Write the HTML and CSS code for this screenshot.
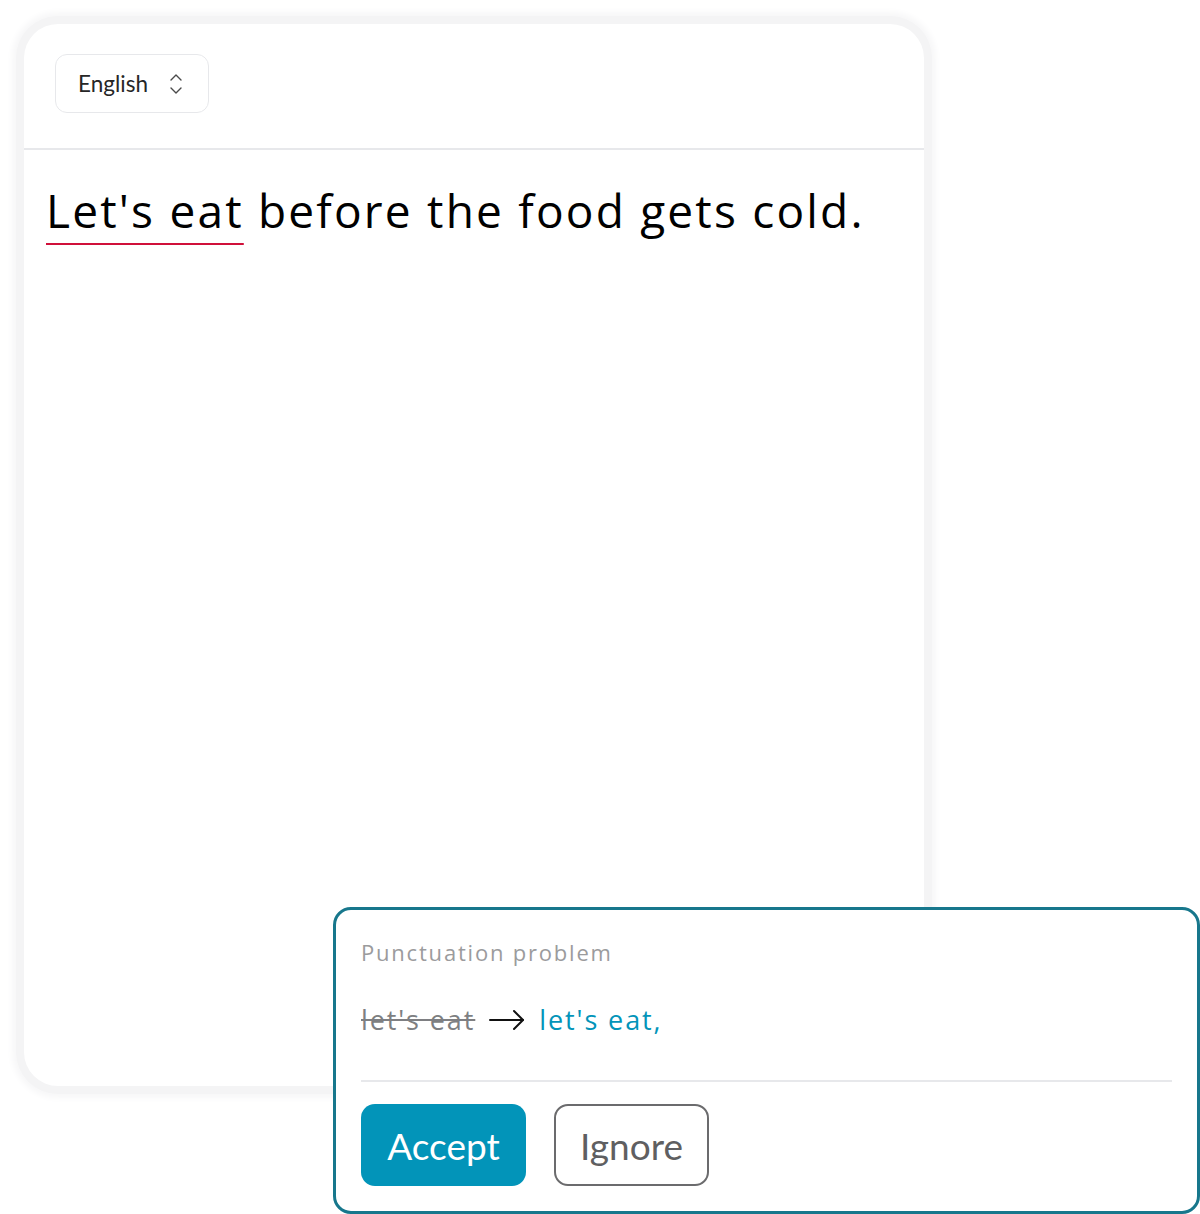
FILE: index.html
```html
<!DOCTYPE html>
<html lang="en">
<head>
  <meta charset="UTF-8" />
  <title>Grammar check</title>
  <link rel="stylesheet" href="styles.css">
</head>
<body>
  <div class="card">
    <div class="card-head">
      <button class="lang">
        <span>English</span>
        <svg width="14" height="22" viewBox="0 0 14 22" fill="none" stroke="#4a4a4a" stroke-width="1.4" stroke-linecap="round" stroke-linejoin="round">
          <path d="M2 7 L7 2 L12 7"/>
          <path d="M2 15 L7 20 L12 15"/>
        </svg>
      </button>
    </div>
    <div class="editor">
      <span class="mark">Let's eat</span> before the food gets cold.
    </div>
  </div>

  <div class="popup">
    <div class="kind">Punctuation problem</div>
    <div class="fix">
      <span class="old">let's eat</span>
      <svg class="arrow" width="36" height="22" viewBox="0 0 36 22" fill="none" stroke="#111" stroke-width="2" stroke-linecap="round" stroke-linejoin="round">
        <path d="M1 11 H34"/>
        <path d="M25 2 L34 11 L25 20"/>
      </svg>
      <span class="new">let's eat,</span>
    </div>
    <div class="actions">
      <button class="btn accept">Accept</button>
      <button class="btn ignore">Ignore</button>
    </div>
  </div>
</body>
</html>
```

FILE: styles.css
```css
:root {
  --border: #e7e8eb;
  --teal: #0294b9;
  --teal-dark: #17778c;
  --muted: #9b9b9d;
  --red: #d0103a;
}
* { box-sizing: border-box; }
body {
  margin: 0; padding: 24px;
  background: #fff; color: #000;
  font-family: "Open Sans", sans-serif;
}
.card {
  width: 900px; height: 1062px;
  background: #fff; border-radius: 34px;
  box-shadow: 0 0 0 8px #f4f4f5, 0 0 6px 12px #f7f7f8;
  overflow: hidden;
}
.card-head {
  height: 126px; padding: 30px 31px;
  border-bottom: 2px solid var(--border);
}
.lang {
  display: flex; align-items: center; gap: 21px;
  height: 59px; width: 154px; padding: 0 0 0 22px;
  background: #fff; border: 1px solid var(--border); border-radius: 12px;
  font-family: Lato, sans-serif; font-size: 22.5px; color: #262626;
}
.editor {
  padding: 30px 22px;
  font-size: 46px; line-height: 60px; letter-spacing: 2.2px;
}
.mark {
  text-decoration: underline; text-decoration-color: var(--red);
  text-decoration-thickness: 2px; text-underline-offset: 15px;
}
.popup {
  position: absolute; left: 333px; top: 907px;
  width: 867px; height: 307px;
  background: #fff; border: 3px solid var(--teal-dark); border-radius: 18px;
  padding: 26px 25px 0 25px;
}
.kind { font-size: 22px; letter-spacing: 1.8px; color: var(--muted); line-height: 32px; }
.fix {
  display: flex; align-items: center; gap: 14px;
  margin-top: 31px; height: 40px;
  font-size: 27px; letter-spacing: 1.9px;
}
.old { color: #7e7f82; text-decoration: line-through; text-decoration-thickness: 2px; }
.arrow { margin-top: 2px; }
.new { color: var(--teal); }
.actions {
  display: flex; gap: 28px;
  margin-top: 41px; padding-top: 22px;
  border-top: 2px solid var(--border);
}
.btn {
  height: 82px; border-radius: 14px;
  font-family: Lato, sans-serif; font-size: 37px;
}
.accept { width: 165px; background: var(--teal); color: #fff; border: none; }
.ignore { width: 155px; background: #fff; color: #5f5f61; border: 2px solid #6b6b6d; }
```
